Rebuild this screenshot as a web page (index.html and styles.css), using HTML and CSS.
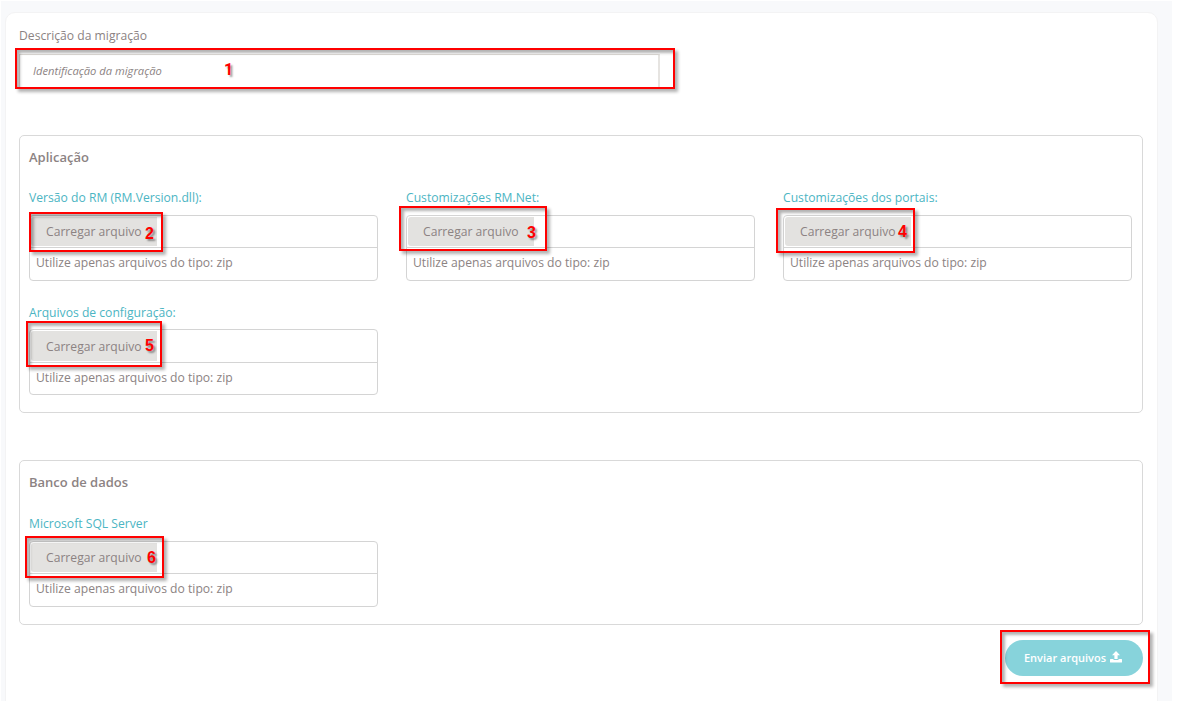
FILE: index.html
```html
<!DOCTYPE html>
<html lang="pt-BR">
<head>
    <meta charset="UTF-8">
    <meta name="viewport" content="width=device-width, initial-scale=1.0">
    <title>Migração</title>
    <link rel="stylesheet" href="styles.css">
</head>
<body>
    <div class="page">
        <form class="card">
            <label class="desc-label" for="descricao">Descrição da migração</label>
            <input class="desc-input" type="text" id="descricao" placeholder="Identificação da migração">

            <section class="group group-app">
                <h2>Aplicação</h2>
                <div class="fields">
                    <div class="field">
                        <span class="field-label">Versão do RM (RM.Version.dll):</span>
                        <div class="upload">
                            <div class="upload-row"><button type="button" class="upload-btn">Carregar arquivo</button></div>
                            <div class="upload-hint">Utilize apenas arquivos do tipo: zip</div>
                        </div>
                    </div>
                    <div class="field">
                        <span class="field-label">Customizações RM.Net:</span>
                        <div class="upload">
                            <div class="upload-row"><button type="button" class="upload-btn">Carregar arquivo</button></div>
                            <div class="upload-hint">Utilize apenas arquivos do tipo: zip</div>
                        </div>
                    </div>
                    <div class="field">
                        <span class="field-label">Customizações dos portais:</span>
                        <div class="upload">
                            <div class="upload-row"><button type="button" class="upload-btn">Carregar arquivo</button></div>
                            <div class="upload-hint">Utilize apenas arquivos do tipo: zip</div>
                        </div>
                    </div>
                    <div class="field">
                        <span class="field-label">Arquivos de configuração:</span>
                        <div class="upload upload-config">
                            <div class="upload-row"><button type="button" class="upload-btn">Carregar arquivo</button></div>
                            <div class="upload-hint">Utilize apenas arquivos do tipo: zip</div>
                        </div>
                    </div>
                </div>
            </section>

            <section class="group group-db">
                <h2>Banco de dados</h2>
                <div class="fields">
                    <div class="field">
                        <span class="field-label">Microsoft SQL Server</span>
                        <div class="upload">
                            <div class="upload-row"><button type="button" class="upload-btn">Carregar arquivo</button></div>
                            <div class="upload-hint">Utilize apenas arquivos do tipo: zip</div>
                        </div>
                    </div>
                </div>
            </section>

            <div class="actions">
                <button type="button" class="send-btn">
                    <span>Enviar arquivos</span>
                    <svg width="12" height="12" viewBox="0 0 12 12" fill="#fff">
                        <path d="M6 0 L10 4.2 H7.6 V8 H4.4 V4.2 H2 Z"/>
                        <path d="M0.6 8 H3.5 V8.9 H8.5 V8 H11.4 Q12 8 12 8.6 V11 Q12 11.6 11.4 11.6 H0.6 Q0 11.6 0 11 V8.6 Q0 8 0.6 8 Z"/>
                    </svg>
                </button>
            </div>
        </form>
    </div>

    <!-- Marcadores dos passos -->
    <div class="mark mark-1"><span>1</span></div>
    <div class="mark mark-2"><span>2</span></div>
    <div class="mark mark-3"><span>3</span></div>
    <div class="mark mark-4"><span>4</span></div>
    <div class="mark mark-5"><span>5</span></div>
    <div class="mark mark-6"><span>6</span></div>
    <div class="mark mark-send"></div>
</body>
</html>
```
FILE: styles.css
```css
* {
    box-sizing: border-box;
}

body {
    margin: 0;
    height: 701px;
    overflow: hidden;
    position: relative;
    background: #fff;
    color: #8c8383;
    font-family: "Open Sans", sans-serif;
    font-size: 12.15px;
}

.page {
    width: 1171px;
    height: 700px;
    margin: 1px 0 0 1px;
    padding: 11px 14px 0 4px;
    background: #f8f9fb;
}

.card {
    height: 700px;
    padding: 14px 14px 0 13px;
    background: #fff;
    border: 1px solid #f3f3f4;
    border-radius: 10px;
}

.desc-label {
    display: block;
    height: 18px;
    line-height: 18px;
}

.desc-input {
    display: block;
    width: 641px;
    height: 34px;
    margin-top: 9px;
    padding: 0 12px 1px 13px;
    border: 1px solid #dddad6;
    border-right: 2px solid #e6e4e1;
    font: inherit;
    font-size: 11.2px;
    background: #fff;
}

.desc-input::placeholder {
    color: #8c8383;
    font-style: italic;
    opacity: 1;
}

.group {
    border: 1px solid #d9d9d9;
    border-radius: 5px;
    padding: 11px 10px 0 9px;
}

.group-app {
    height: 278px;
    margin-top: 47px;
}

.group-db {
    height: 165px;
    margin-top: 47px;
}

.group h2 {
    height: 20px;
    margin: 0;
    line-height: 20px;
    font-size: 13px;
    font-weight: 600;
}

.fields {
    display: grid;
    grid-template-columns: repeat(3, 349px);
    column-gap: 28px;
    row-gap: 22px;
    margin-top: 21px;
}

.group-db .fields {
    margin-top: 22px;
}

.field-label {
    display: block;
    height: 20px;
    line-height: 20px;
    color: #4cb5c3;
}

.upload {
    height: 66px;
    margin-top: 7px;
    border: 1px solid #d4d4d4;
    border-radius: 4px;
}

.upload-config {
    margin-top: 6px;
}

.upload-row {
    height: 32px;
    padding: 1px;
    border-bottom: 1px solid #d4d4d4;
}

.upload-config .upload-row {
    height: 33px;
}

.upload-btn {
    display: block;
    width: 126px;
    height: 29px;
    padding: 0 0 0 15px;
    border: 0;
    border-radius: 3px 0 0 3px;
    background: #e3e2e0;
    color: inherit;
    font: inherit;
    text-align: left;
}

.upload-config .upload-btn {
    height: 30px;
}

.upload-hint {
    padding-left: 6px;
    line-height: 30px;
}

.actions {
    display: flex;
    justify-content: flex-end;
    margin-top: 15px;
}

.send-btn {
    display: flex;
    align-items: center;
    justify-content: center;
    gap: 4px;
    width: 138px;
    height: 36px;
    padding: 0 2px 2px 0;
    border: 0;
    border-radius: 18px;
    background: #87d3db;
    color: #fff;
    font: 600 11px "Open Sans", sans-serif;
}

.mark {
    position: absolute;
    border: 2px solid #f00;
    box-shadow: 3px 3px 3px rgba(0, 0, 0, 0.3), inset 3px 3px 3px rgba(0, 0, 0, 0.3);
}

.mark span {
    position: absolute;
    color: #f00;
    font: bold 16px/18px "Liberation Sans", Arial, sans-serif;
    text-shadow: 2px 2px 2px rgba(0, 0, 0, 0.4);
}

.mark-1 { left: 15px; top: 48px; width: 660px; height: 41px; }
.mark-2 { left: 29px; top: 212px; width: 134px; height: 40px; }
.mark-3 { left: 399px; top: 206px; width: 148px; height: 45px; }
.mark-4 { left: 776px; top: 208px; width: 139px; height: 45px; }
.mark-5 { left: 26px; top: 321px; width: 136px; height: 46px; }
.mark-6 { left: 25px; top: 536px; width: 139px; height: 42px; }
.mark-send { left: 1000px; top: 630px; width: 150px; height: 54px; }

/* o "1" da Roboto não tem base */
.mark-1 span {
    left: 207px;
    top: 11px;
    font-family: Roboto, sans-serif;
}
.mark-2 span { left: 114px; top: 11px; }
.mark-3 span { left: 126px; top: 16px; }
.mark-4 span { left: 120px; top: 13px; }
.mark-5 span { left: 117px; top: 14px; }
.mark-6 span { left: 120px; top: 11px; }
```
